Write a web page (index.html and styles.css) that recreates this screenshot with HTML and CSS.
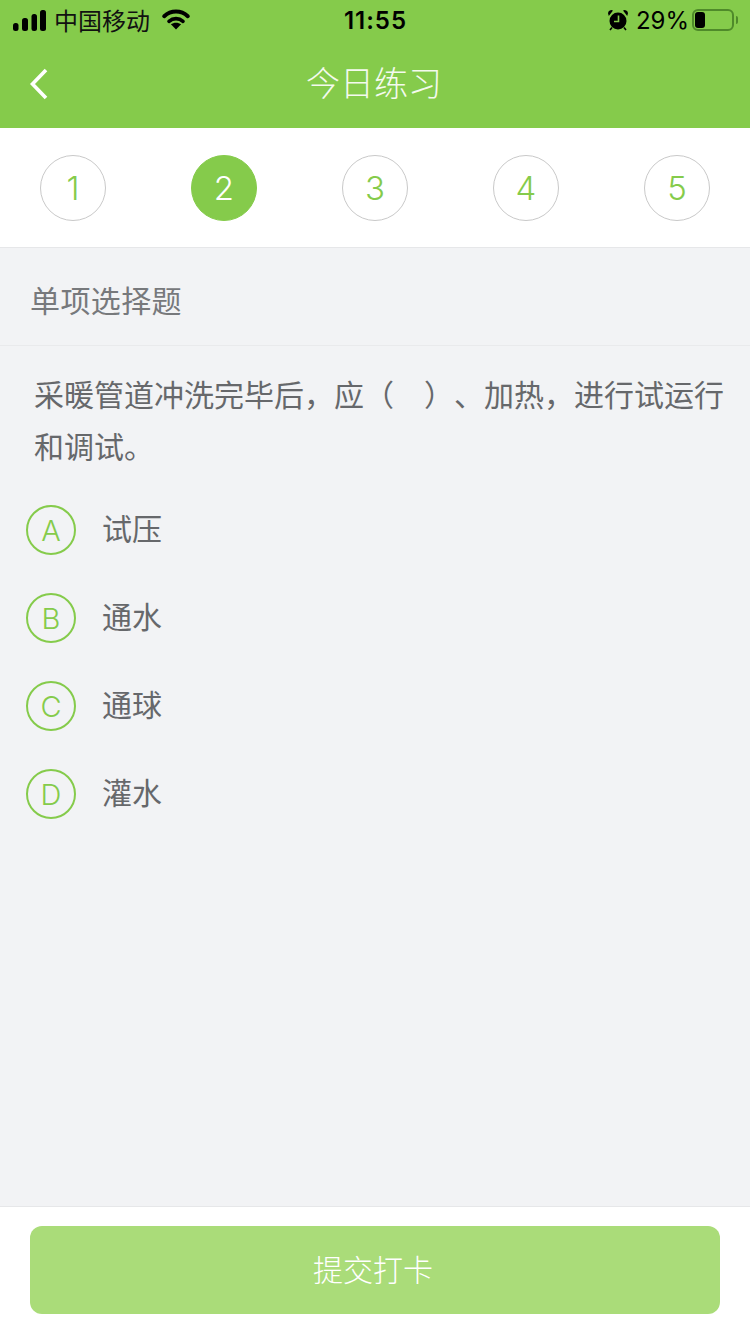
FILE: index.html
```
<!DOCTYPE html>
<html lang="zh">
<head>
<meta charset="utf-8">
<title>今日练习</title>
<link rel="stylesheet" href="styles.css">
</head>
<body>
<div class="page">
  <header class="header">
    <div class="status">
      <div class="status-left">
        <svg class="signal" width="34" height="21" viewBox="0 0 34 21"><rect x="0" y="13" width="5.500" height="8" rx="2.500"/><rect x="9" y="8" width="6" height="13" rx="2.500"/><rect x="18.500" y="4" width="5.500" height="17" rx="2.500"/><rect x="27" y="0" width="6" height="21" rx="2.500"/></svg>
        <span class="carrier">中国移动</span>
        <svg class="wifi" width="30" height="22" viewBox="0 0 30 22"><path d="M3.200 8.200C6.300 5.300 10.400 3.500 15 3.500s8.700 1.800 11.800 4.700" fill="none" stroke="#000" stroke-width="4" stroke-linecap="round"/><path d="M8 13.300c1.900-1.700 4.300-2.700 7-2.700s5.100 1 7 2.700" fill="none" stroke="#000" stroke-width="3.600" stroke-linecap="round"/><path d="M9.900 16.300c1.400-1 3.200-1.600 5.100-1.600s3.700.6 5.100 1.600L15 21.500z"/></svg>
      </div>
      <span class="time">11:55</span>
      <div class="status-right">
        <svg class="alarm" width="22" height="22" viewBox="0 0 22 22"><circle cx="11" cy="12" r="8.500"/><path d="M1.800 7 1 4.200A3.400 3.400 0 0 1 6 1.500zM20.200 7 21 4.200a3.400 3.400 0 0 0-5-2.700z"/><path d="M5 18.500 3 21M17 18.500l2 2.500" stroke="#000" stroke-width="1.600" fill="none"/><path d="M11.500 6.500v6H7" fill="none" stroke="#85cb4b" stroke-width="1.600"/></svg>
        <span class="percent">29%</span>
        <span class="battery"><span class="battery-fill"></span></span>
        <span class="battery-tip"></span>
      </div>
    </div>
    <div class="nav">
      <svg class="back" width="20" height="32" viewBox="0 0 20 32"><path d="M17 2 3.500 16 17 30" fill="none" stroke="#fff" stroke-width="3.600"/></svg>
      <h1 class="title">今日练习</h1>
    </div>
  </header>

  <nav class="steps">
    <span class="step">1</span>
    <span class="step step-active">2</span>
    <span class="step">3</span>
    <span class="step">4</span>
    <span class="step">5</span>
  </nav>

  <main class="content">
    <div class="type">单项选择题</div>
    <p class="question">采暖管道冲洗完毕后，应（　）、加热，进行试运行和调试。</p>
    <ul class="options">
      <li class="option"><span class="letter">A</span><span class="option-text">试压</span></li>
      <li class="option"><span class="letter">B</span><span class="option-text">通水</span></li>
      <li class="option"><span class="letter">C</span><span class="option-text">通球</span></li>
      <li class="option"><span class="letter">D</span><span class="option-text">灌水</span></li>
    </ul>
  </main>

  <footer class="footer">
    <button class="submit" type="button">提交打卡</button>
  </footer>
</div>
</body>
</html>
```
FILE: styles.css
```
* { box-sizing: border-box; }
html, body { margin: 0; padding: 0; }
body {
  width: 750px;
  height: 1334px;
  overflow: hidden;
  font-family: "Noto Sans CJK SC", "Liberation Sans", sans-serif;
  background: #f2f3f5;
  text-spacing-trim: space-all;
}
.page { display: flex; flex-direction: column; height: 1334px; }

.header { height: 128px; background: #85cb4b; flex: none; }
.status {
  height: 40px;
  padding: 0 12px 0 13px;
  display: grid;
  grid-template-columns: 1fr auto 1fr;
  align-items: center;
  color: #000;
}
.status-left { display: flex; align-items: center; }
.signal { margin-right: 7px; }
.carrier { font-size: 24px; line-height: 40px; color: #111; }
.wifi { margin-left: 11px; margin-top: -2px; }
.time {
  font-family: Inter, "Liberation Sans", sans-serif;
  font-size: 24px;
  font-weight: 600;
  letter-spacing: 1px;
}
.status-right { display: flex; align-items: center; justify-content: flex-end; }
.alarm { margin-right: 7px; margin-top: -1px; }
.percent {
  font-family: Inter, "Liberation Sans", sans-serif;
  font-size: 24px;
  margin-right: 3px;
}
.battery {
  width: 42px;
  height: 22px;
  border: 2px solid #4f8a2a;
  border-radius: 6px;
  padding: 1px;
  display: flex;
}
.battery-fill { width: 10px; background: #000; border-radius: 3px; }
.battery-tip {
  width: 2px;
  height: 8px;
  background: #4f8a2a;
  border-radius: 0 2px 2px 0;
  margin-left: 2px;
}

.nav {
  height: 88px;
  position: relative;
  display: flex;
  align-items: center;
  justify-content: center;
}
.back { position: absolute; left: 29px; top: 28px; }
.title {
  margin: 0 2px 4px 0;
  font-size: 34px;
  font-weight: 300;
  color: #f4faee;
  line-height: 40px;
}

.steps {
  height: 120px;
  flex: none;
  background: #fff;
  border-bottom: 1px solid #e6e7e9;
  padding: 27px 40px 0;
  display: flex;
  justify-content: space-between;
  align-items: flex-start;
}
.step {
  width: 66px;
  height: 66px;
  border-radius: 50%;
  border: 1px solid #c9c9c9;
  display: flex;
  align-items: center;
  justify-content: center;
  font-family: Inter, "Liberation Sans", sans-serif;
  font-weight: 350;
  font-size: 33px;
  color: #85cb4b;
}
.step-active { background: #85cb4b; border-color: #85cb4b; color: #fff; }

.content { flex: 1; }
.type {
  height: 98px;
  padding: 4px 30px 0;
  display: flex;
  align-items: center;
  font-size: 30px;
  letter-spacing: .4px;
  color: #77797c;
  border-bottom: 1px solid #e9eaec;
}
.question {
  margin: 0;
  padding: 21px 20px 0 34px;
  font-size: 30px;
  line-height: 52px;
  color: #66686b;
}
.options { list-style: none; margin: 0; padding: 15px 0 0 26px; }
.option { height: 88px; display: flex; align-items: center; }
.letter {
  width: 50px;
  height: 50px;
  border-radius: 50%;
  border: 2px solid #85cb4b;
  display: flex;
  align-items: center;
  justify-content: center;
  font-family: Inter, "Liberation Sans", sans-serif;
  font-weight: 350;
  font-size: 29px;
  color: #85cb4b;
}
.option-text { margin: 0 0 6px 26px; font-size: 30px; color: #66686b; }

.footer {
  height: 128px;
  flex: none;
  background: #fff;
  border-top: 1px solid #e6e7e9;
  padding: 19px 30px 0;
}
.submit {
  display: block;
  width: 690px;
  height: 88px;
  border: 0;
  border-radius: 12px;
  padding: 0 4px 4px 0;
  background: #aadc79;
  color: #fff;
  font-family: inherit;
  font-weight: 300;
  font-size: 30px;
}
```
